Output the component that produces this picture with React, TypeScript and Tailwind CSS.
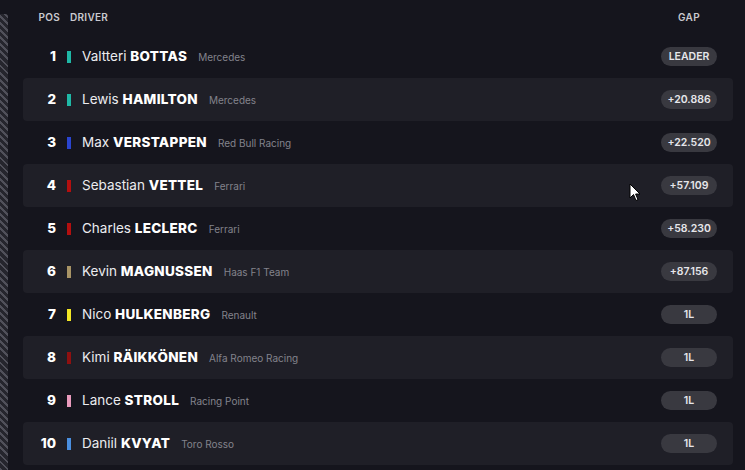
import React from "react";

type Row = { pos: number; first: string; last: string; team: string; color: string; gap: string };

const rows: Row[] = [
  { pos: 1, first: "Valtteri", last: "BOTTAS", team: "Mercedes", color: "#1fb8a6", gap: "LEADER" },
  { pos: 2, first: "Lewis", last: "HAMILTON", team: "Mercedes", color: "#1fb8a6", gap: "+20.886" },
  { pos: 3, first: "Max", last: "VERSTAPPEN", team: "Red Bull Racing", color: "#2a45d0", gap: "+22.520" },
  { pos: 4, first: "Sebastian", last: "VETTEL", team: "Ferrari", color: "#b30f0f", gap: "+57.109" },
  { pos: 5, first: "Charles", last: "LECLERC", team: "Ferrari", color: "#b30f0f", gap: "+58.230" },
  { pos: 6, first: "Kevin", last: "MAGNUSSEN", team: "Haas F1 Team", color: "#a89466", gap: "+87.156" },
  { pos: 7, first: "Nico", last: "HULKENBERG", team: "Renault", color: "#f2e625", gap: "1L" },
  { pos: 8, first: "Kimi", last: "RÄIKKÖNEN", team: "Alfa Romeo Racing", color: "#8f1010", gap: "1L" },
  { pos: 9, first: "Lance", last: "STROLL", team: "Racing Point", color: "#e99bbd", gap: "1L" },
  { pos: 10, first: "Daniil", last: "KVYAT", team: "Toro Rosso", color: "#4a8fe0", gap: "1L" },
];

export default function App() {
  return (
    <div
      className="relative w-[745px] h-[470px] overflow-hidden bg-[#15151d] flex"
      style={{ fontFamily: "Inter, 'Noto Sans', sans-serif" }}
    >
      <div className="w-[8px] mt-[14px] rounded-tr-[3px] bg-[repeating-linear-gradient(45deg,#50505a_0px,#50505a_2px,#25252d_2px,#25252d_5px)]" />
      <div className="flex-1 flex flex-col pl-[15px] pr-[12px]">
        <div className="h-[35px] flex items-start pt-[10px] text-[10px] font-semibold text-[#c9c9cf] tracking-[0.3px]">
          <div className="w-[37px] text-right">POS</div>
          <div className="ml-[10px]">DRIVER</div>
          <div className="ml-auto w-[56px] mr-[16px] text-center">GAP</div>
        </div>
        {rows.map((r, i) => (
          <div
            key={r.pos}
            className={`h-[43px] flex items-center rounded-[4px] ${i % 2 === 1 ? "bg-[#1f1f27]" : ""}`}
          >
            <div className="w-[33px] text-right text-[13.5px] font-extrabold text-white">{r.pos}</div>
            <div className="ml-[11px] w-[4px] h-[12px]" style={{ backgroundColor: r.color }} />
            <div className="ml-[11px] text-[13.5px] text-[#ececef] tracking-[0px]">
              {r.first} <span className="font-extrabold text-white tracking-[0.3px]">{r.last}</span>
            </div>
            <div className="ml-[11px] text-[10px] text-[#83838c] tracking-[0px] mt-[1px]">{r.team}</div>
            <div className="ml-auto mr-[16px] w-[56px] h-[19px] rounded-full bg-[#393940] flex items-center justify-center text-[10.5px] font-semibold text-[#e6e6ea]">
              {r.gap}
            </div>
          </div>
        ))}
      </div>
      <svg className="absolute left-[629px] top-[183px]" width="12" height="19" viewBox="0 0 12 19">
        <path d="M1 1 L1 15 L4.5 11.5 L7 17.5 L9 16.6 L6.6 11 L11 11 Z" fill="#fff" stroke="#000" strokeWidth="1" />
      </svg>
    </div>
  );
}
